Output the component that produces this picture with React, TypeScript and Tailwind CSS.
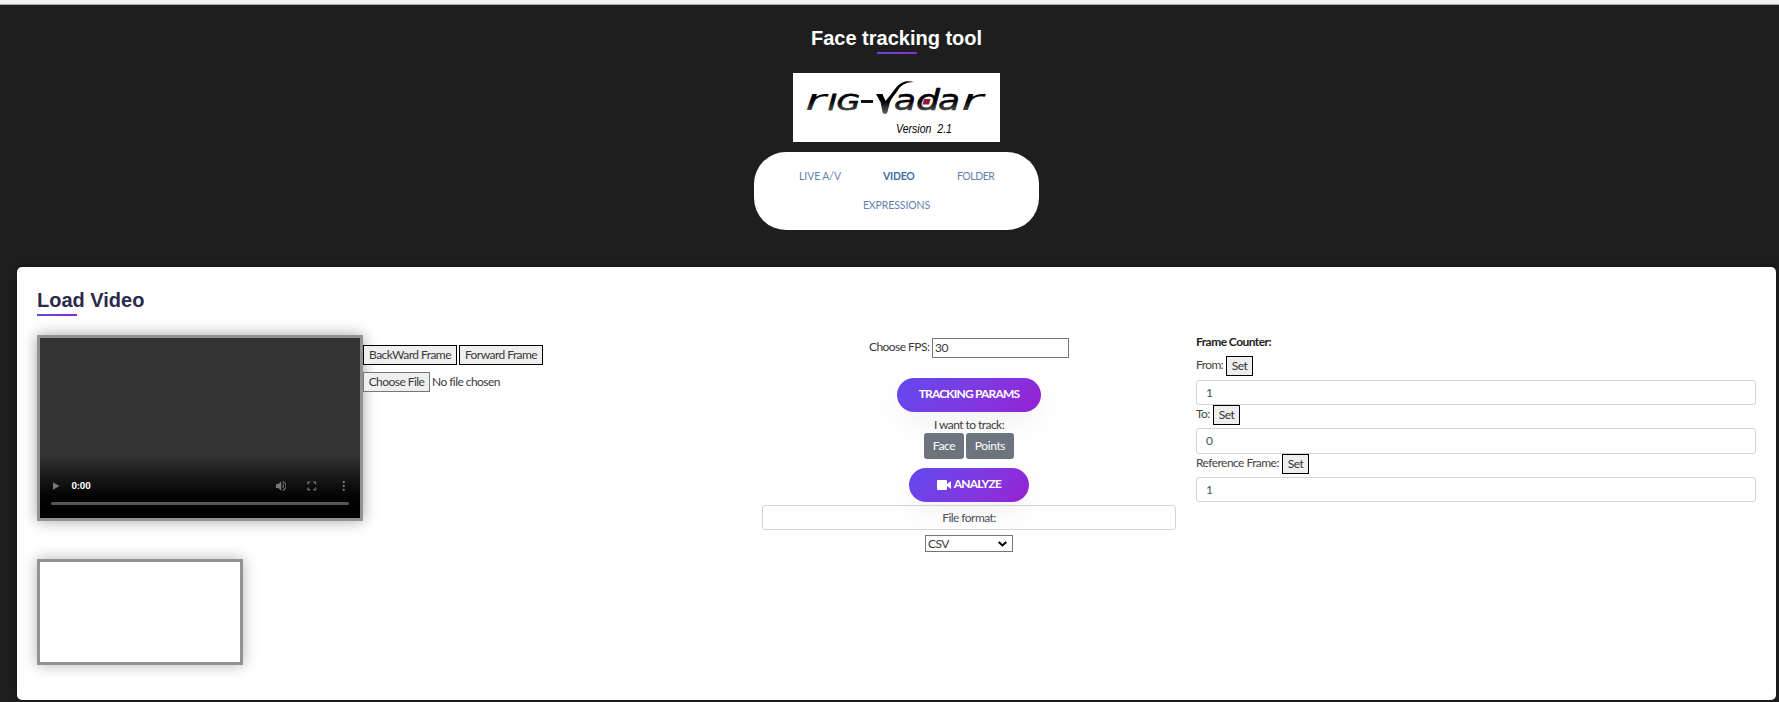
import type { ReactNode } from "react";

function Logo() {
  return (
    <svg className="block h-[69px] w-[207px] bg-white tracking-normal" viewBox="0 0 207 69" role="img" aria-label="rig-Vadar Version 2.1">
      <defs>
        <linearGradient id="ink" x1="0" y1="20" x2="0" y2="40" gradientUnits="userSpaceOnUse">
          <stop offset="0.4" stopColor="#000" />
          <stop offset="1" stopColor="#5c5c5c" />
        </linearGradient>
      </defs>
      <g fill="url(#ink)" fontFamily="'DejaVu Sans', sans-serif" fontStyle="italic" fontSize="29">
        <text x="12" y="36.500" textLength="21" lengthAdjust="spacingAndGlyphs">r</text>
        <text x="35" y="36.500" fontSize="22" stroke="url(#ink)" strokeWidth="0.8" textLength="32" lengthAdjust="spacingAndGlyphs">IG</text>
        <g stroke="url(#ink)" strokeWidth="0.6">
          <text x="101" y="36.500" textLength="22" lengthAdjust="spacingAndGlyphs">a</text>
          <text x="123" y="36.500" textLength="24" lengthAdjust="spacingAndGlyphs">d</text>
          <text x="145" y="36.500" textLength="22" lengthAdjust="spacingAndGlyphs">a</text>
        </g>
        <text x="168" y="36.500" textLength="22" lengthAdjust="spacingAndGlyphs">r</text>
      </g>
      <rect x="68" y="27" width="12" height="3" fill="#111" />
      <path d="M83 21 H89.500 L92.500 28 C96 24 99 20 102 16 C107 9 113 7 121 9 C113 9 108 12 105 17 C102 22 99 24 97 29 L94.500 39 C94 41.500 90 41.500 89.500 39 L87.500 29 Z" fill="url(#ink)" />
      <path d="M131 26 H137.500 L136 31.500 H129.500 Z" fill="#9b1636" />
      <text x="103" y="60" fontSize="13" fontStyle="italic" fontFamily="'Liberation Sans', sans-serif" textLength="56" lengthAdjust="spacingAndGlyphs" xmlSpace="preserve">Version  2.1</text>
    </svg>
  );
}

function Bar() {
  return <div className="h-[2px] w-10 bg-linear-to-r from-[#5b4bd6] to-[#8f26cc]" />;
}

function SetButton() {
  return (
    <button className="flex h-5 w-[27px] shrink-0 justify-center border border-black bg-[#efefef] text-[12px] leading-[17px] text-[#333]">
      Set
    </button>
  );
}

function FrameField({ label, value, labelWidth, height }: { label: string; value: string; labelWidth: string; height: string }) {
  return (
    <div>
      <div className="flex h-5 items-start">
        <span className={`${labelWidth} shrink-0 whitespace-nowrap leading-[18px] text-[#444]`}>{label}</span>
        <SetButton />
      </div>
      <div className={`${height} w-full rounded-[3px] border border-[#ced4da] pl-[9px] leading-[23px] text-[#495057]`}>{value}</div>
    </div>
  );
}

function Pill({ children, className }: { children: ReactNode; className: string }) {
  return (
    <button
      className={`${className} flex h-[34px] items-start justify-center rounded-full bg-linear-135 from-[#6049ef] to-[#961ed4] pt-px text-[12px] leading-[30px] font-bold tracking-[-0.8px] text-white shadow-[0_10px_30px_rgba(0,0,0,0.06)]`}
    >
      {children}
    </button>
  );
}

function VideoPlayer() {
  return (
    <div className="flex h-[186px] w-[326px] shrink-0 flex-col border-3 border-[#929292] bg-[#333] tracking-normal shadow-[0_0_14px_rgba(0,0,0,0.35)]">
      <div className="h-[118px]" />
      <div className="flex h-[62px] flex-col bg-linear-to-b from-[#333] to-black px-[11px] pt-[22px]">
        <div className="flex h-4 items-center text-[#666]">
          <svg className="h-3 w-[10px]" viewBox="0 0 10 12"><path d="M2 2v8l7-4z" fill="#777" /></svg>
          <span className="ml-[11px] w-[19px] font-['Roboto'] text-[9.500px] font-bold text-white">0:00</span>
          <svg className="ml-[184px] h-3 w-3" viewBox="0 0 24 24" fill="#777">
            <path d="M2 8v8h5l6 6V2L7 8zm14-1v10c2-1 3-3 3-5s-1-4-3-5zm0-5v2.500c4 1 6 4 6 7.500s-2 6.500-6 7.500V22c5-1 8-5 8-10s-3-9-8-10z" />
          </svg>
          <svg className="ml-5 h-3 w-3" viewBox="0 0 12 12" fill="none" stroke="#666" strokeWidth="1.500">
            <path d="M2 4.500V2h2.500M7.500 2H10v2.500M10 7.500V10H7.500M4.500 10H2V7.500" />
          </svg>
          <svg className="ml-[20px] h-3 w-3" viewBox="0 0 12 12" fill="#777">
            <circle cx="6" cy="2" r="1.200" /><circle cx="6" cy="6" r="1.200" /><circle cx="6" cy="10" r="1.200" />
          </svg>
        </div>
        <div className="mt-[8px] h-[3px] rounded-full bg-[#555]" />
      </div>
    </div>
  );
}

export default function App() {
  return (
    <div className="h-[702px] w-full overflow-hidden bg-[#1e1e1e] font-['Lato','Noto_Sans',sans-serif] text-[12px] tracking-[-0.55px] text-[#3a3a3a]">
      <div className="h-[5px] border-b border-[#aaa] bg-[#f0f2f1]" />
      <header className="flex h-[262px] flex-col items-center pl-[14px]">
        <h1 className="mt-[19px] h-[28px] font-['Liberation_Sans',sans-serif] text-[20px] leading-[28px] font-bold tracking-normal text-white">Face tracking tool</h1>
        <Bar />
        <div className="mt-[19px]"><Logo /></div>
        <nav className="mt-[10px] h-[78px] w-[285px] rounded-[32px] bg-white pt-[16px] text-[10.500px] tracking-[-0.25px] text-[#5f82b0]">
          <div className="flex h-[17px] items-center pl-[45px]">
            <a className="w-[84px] tracking-[-0.1px]">LIVE A/V</a>
            <a className="w-[74px] font-bold text-[#3f6fa8]">VIDEO</a>
            <a className="tracking-[-0.5px]">FOLDER</a>
          </div>
          <div className="mt-3 flex h-[17px] items-center justify-center">
            <a className="tracking-[-0.1px]">EXPRESSIONS</a>
          </div>
        </nav>
      </header>

      <main className="mr-[3px] ml-[17px] h-[433px] rounded-[5px] bg-white px-5 pt-[17px] shadow-[0_0_10px_rgba(0,0,0,0.3)]">
        <h2 className="h-[30px] font-['Liberation_Sans',sans-serif] text-[20px] leading-[32px] font-bold tracking-normal text-[#2b2a4c]">Load Video</h2>
        <Bar />
        <div className="mt-[19px] flex h-[224px]">
          <VideoPlayer />
          <div className="w-[399px] shrink-0 pt-[10px]">
            <div className="flex gap-[2px]">
              <button className="flex h-5 w-[94px] justify-center border border-black bg-[#efefef] leading-[17px]">BackWard Frame</button>
              <button className="flex h-5 w-[84px] justify-center border border-black bg-[#efefef] leading-[17px]">Forward Frame</button>
            </div>
            <div className="mt-[7px] flex">
              <button className="flex h-5 w-[67px] justify-center border border-[#767676] bg-[#efefef] leading-[17px]">Choose File</button>
              <span className="ml-[2px] leading-[19px]">No file chosen</span>
            </div>
          </div>

          <section className="flex w-[414px] shrink-0 flex-col items-center pt-[3px]">
            <div className="flex">
              <label className="w-[63px] leading-[18px] whitespace-nowrap">Choose FPS:</label>
              <div className="h-5 w-[137px] border border-[#767676] pl-[2px] leading-[17px]">30</div>
            </div>
            <Pill className="mt-5 w-36">TRACKING PARAMS</Pill>
            <div className="mt-[3px] h-[18px] leading-[19px] tracking-[-0.55px]">I want to track:</div>
            <div className="flex gap-[2px] text-white">
              <button className="h-[26px] w-10 rounded-[3px] bg-[#6c757d] leading-[24px] tracking-[-0.4px]">Face</button>
              <button className="h-[26px] w-12 rounded-[3px] bg-[#6c757d] leading-[24px] tracking-[-0.4px]">Points</button>
            </div>
            <Pill className="mt-[9px] w-[120px]">
              <svg className="mt-[11px] mr-[3px] h-[10px] w-[14px]" viewBox="0 0 14 10" fill="#fff">
                <path d="M1 0h8a1 1 0 0 1 1 1v8a1 1 0 0 1-1 1H1a1 1 0 0 1-1-1V1a1 1 0 0 1 1-1zM10 4l4-3v8l-4-3z" />
              </svg>
              ANALYZE
            </Pill>
            <div className="mt-[3px] h-[25px] w-full rounded-[3px] border border-[#ced4da] text-center leading-[23px] text-[#495057]">File format:</div>
            <div className="mt-[5px] flex h-[17px] w-[88px] items-center border border-[#767676] bg-white pr-[5px] pl-[2px]">
              <span className="flex-1 leading-[15px]">CSV</span>
              <svg className="h-[6px] w-[9px]" viewBox="0 0 9 6" fill="none" stroke="#000" strokeWidth="2"><path d="M.7 1l3.800 3.500L8.300 1" /></svg>
            </div>
          </section>

          <section className="ml-5 w-[560px] shrink-0">
            <div className="h-[21px] leading-[14px] font-bold text-[#222]">Frame Counter:</div>
            <FrameField label="From:" value="1" labelWidth="w-[30px]" height="mt-1 h-[25px]" />
            <FrameField label="To:" value="0" labelWidth="w-[17px]" height="mt-[3px] h-[26px]" />
            <FrameField label="Reference Frame:" value="1" labelWidth="w-[86px]" height="mt-[3px] h-[25px]" />
          </section>
        </div>
        <div className="h-[106px] w-[206px] border-3 border-[#929292] bg-white shadow-[0_0_14px_rgba(0,0,0,0.3)]" />
      </main>
    </div>
  );
}
